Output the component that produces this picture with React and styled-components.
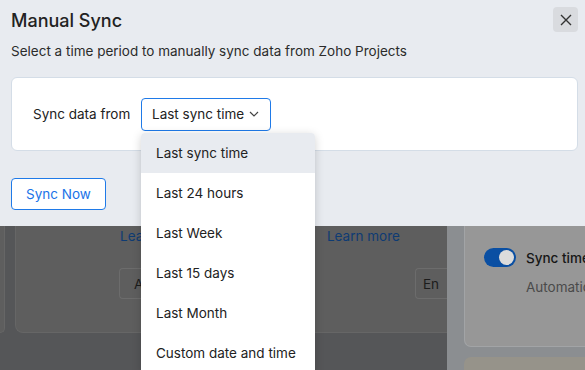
import React from "react";
import styled, { createGlobalStyle } from "styled-components";

const GlobalStyle = createGlobalStyle`
  html, body { margin: 0; padding: 0; }
  body {
    font-family: Inter, "Noto Sans", sans-serif;
    width: 585px;
    height: 370px;
    overflow: hidden;
  }
`;

const Page = styled.div`
  position: relative;
  width: 585px;
  height: 370px;
  display: flex;
  overflow: hidden;
`;

const BgMain = styled.div`
  flex: none;
  width: 447px;
  background: #555658;
  display: flex;
  gap: 10px;
  padding-bottom: 37px;
  box-sizing: border-box;
`;

const BgCard = styled.div`
  flex: ${(p) => (p.$grow ? 1 : "none")};
  width: ${(p) => (p.$grow ? "auto" : "5px")};
  background: #5e5e5e;
  border: 1px solid #666;
  border-top: none;
  border-radius: 0 0 ${(p) => (p.$grow ? "0 8px" : "8px 0")};
  border-right: ${(p) => (p.$grow ? "none" : "1px solid #666")};
  border-left: ${(p) => (p.$grow ? "1px solid #666" : "none")};
  padding-top: 227px;
  box-sizing: border-box;
  display: flex;
  flex-direction: column;
`;

const LinkRow = styled.div`
  display: flex;
  padding-left: 104px;
  gap: 134px;
  font-size: 13.5px;
  color: #0e3b73;
  line-height: 18px;
`;

const BtnRow = styled.div`
  display: flex;
  justify-content: space-between;
  padding-left: 103px;
  margin-top: 23px;
`;

const BgButton = styled.div`
  height: 31px;
  box-sizing: border-box;
  border: 1px solid #6c6c6c;
  border-right: none;
  border-radius: 4px 0 0 4px;
  font-size: 13.5px;
  color: #1c1c1c;
  display: flex;
  align-items: center;
  padding-left: ${(p) => p.$pad}px;
  width: ${(p) => p.$w}px;
`;

const BgSide = styled.div`
  flex: 1;
  min-width: 0;
  background: #8b8e91;
  padding-left: 17px;
  display: flex;
  flex-direction: column;
  gap: 10px;
`;

const SideCard = styled.div`
  height: 347px;
  flex: none;
  background: #979797;
  border: 1px solid #a2a4a6;
  border-right: none;
  border-radius: 0 0 0 7px;
  box-sizing: border-box;
  padding: 247px 0 0 19px;
  overflow: hidden;
`;

const SideCard2 = styled.div`
  flex: 1;
  background: #96938a;
  border-radius: 7px 0 0 0;
`;

const ToggleRow = styled.div`
  display: flex;
  align-items: center;
  gap: 10px;
  font-size: 13.5px;
  font-weight: 500;
  color: #161616;
  white-space: nowrap;
`;

const Toggle = styled.div`
  width: 32px;
  height: 19px;
  border-radius: 10px;
  background: #0a4fa3;
  position: relative;
  flex: none;
  &::after {
    content: "";
    position: absolute;
    right: 2px;
    top: 2px;
    width: 15px;
    height: 15px;
    border-radius: 50%;
    background: #dcdcdc;
  }
`;

const SideText = styled.div`
  margin-top: 12px;
  padding-left: 42px;
  font-size: 13.5px;
  color: #4a4a4a;
  white-space: nowrap;
`;

const Modal = styled.div`
  position: absolute;
  left: 0;
  top: 0;
  width: 585px;
  height: 226px;
  background: #e8ebf0;
  padding: 0 7px 0 11px;
  box-sizing: border-box;
`;

const Header = styled.div`
  display: flex;
  justify-content: space-between;
  align-items: flex-start;
  padding-top: 7px;
`;

const Title = styled.h2`
  margin: 0;
  font-size: 18px;
  font-weight: 500;
  color: #222;
  line-height: 22px;
  padding-top: 3px;
`;

const CloseBtn = styled.button`
  width: 25px;
  height: 25px;
  border: none;
  border-radius: 4px;
  background: #d9dbdf;
  display: flex;
  align-items: center;
  justify-content: center;
  padding: 0;
`;

const Subtitle = styled.p`
  margin: 10px 0 0;
  font-size: 13.5px;
  color: #2b2b2b;
  line-height: 18px;
`;

const Card = styled.div`
  margin-top: 17px;
  height: 74px;
  width: 567px;
  background: #fff;
  border: 1px solid #d4dde7;
  border-radius: 6px;
  box-sizing: border-box;
  display: flex;
  align-items: center;
  padding-left: 21px;
`;

const Label = styled.span`
  font-size: 13.5px;
  color: #222;
  width: 108px;
`;

const SelectWrap = styled.div`
  position: relative;
`;

const Select = styled.div`
  width: 130px;
  height: 33px;
  box-sizing: border-box;
  border: 1px solid #1f7ae8;
  border-radius: 4px;
  display: flex;
  align-items: center;
  padding-left: 10px;
  gap: 5px;
  font-size: 13.5px;
  color: #222;
  background: #fff;
`;

const Menu = styled.ul`
  position: absolute;
  left: 0;
  top: 35px;
  width: 174px;
  margin: 0;
  padding: 0;
  list-style: none;
  background: #fff;
  border-radius: 4px;
  box-shadow: 0 2px 10px rgba(0, 0, 0, 0.18);
  z-index: 5;
`;

const MenuItem = styled.li`
  height: 40px;
  display: flex;
  align-items: center;
  padding-left: 15px;
  font-size: 13.5px;
  color: #222;
  background: ${(p) => (p.$active ? "#e8ebf0" : "#fff")};
  border-radius: ${(p) => (p.$active ? "4px 4px 0 0" : "0")};
`;

const SyncButton = styled.button`
  margin-top: 27px;
  width: 95px;
  height: 32px;
  border: 1px solid #1f7ae8;
  border-radius: 4px;
  background: #fff;
  color: #1a73e8;
  font-family: inherit;
  font-size: 13.5px;
  padding: 0;
`;

const options = [
  "Last sync time",
  "Last 24 hours",
  "Last Week",
  "Last 15 days",
  "Last Month",
  "Custom date and time",
];

export default function App() {
  return (
    <>
      <GlobalStyle />
      <Page>
        <BgMain>
          <BgCard />
          <BgCard $grow>
            <LinkRow>
              <span>Learn more</span>
              <span>Learn more</span>
            </LinkRow>
            <BtnRow>
              <BgButton $w={40} $pad={14}>A</BgButton>
              <BgButton $w={32} $pad={7}>En</BgButton>
            </BtnRow>
          </BgCard>
        </BgMain>
        <BgSide>
          <SideCard>
            <ToggleRow>
              <Toggle />
              Sync time
            </ToggleRow>
            <SideText>Automatic</SideText>
          </SideCard>
          <SideCard2 />
        </BgSide>

        <Modal>
          <Header>
            <Title>Manual Sync</Title>
            <CloseBtn aria-label="Close">
              <svg width="12" height="12" viewBox="0 0 12 12">
                <path d="M1 1L11 11M11 1L1 11" stroke="#333" strokeWidth="1.4" />
              </svg>
            </CloseBtn>
          </Header>
          <Subtitle>Select a time period to manually sync data from Zoho Projects</Subtitle>
          <Card>
            <Label>Sync data from</Label>
            <SelectWrap>
              <Select>
                Last sync time
                <svg width="10" height="6" viewBox="0 0 10 6">
                  <path d="M1 1L5 5L9 1" stroke="#444" strokeWidth="1.2" fill="none" />
                </svg>
              </Select>
              <Menu>
                {options.map((o, i) => (
                  <MenuItem key={o} $active={i === 0}>
                    {o}
                  </MenuItem>
                ))}
              </Menu>
            </SelectWrap>
          </Card>
          <SyncButton>Sync Now</SyncButton>
        </Modal>
      </Page>
    </>
  );
}
